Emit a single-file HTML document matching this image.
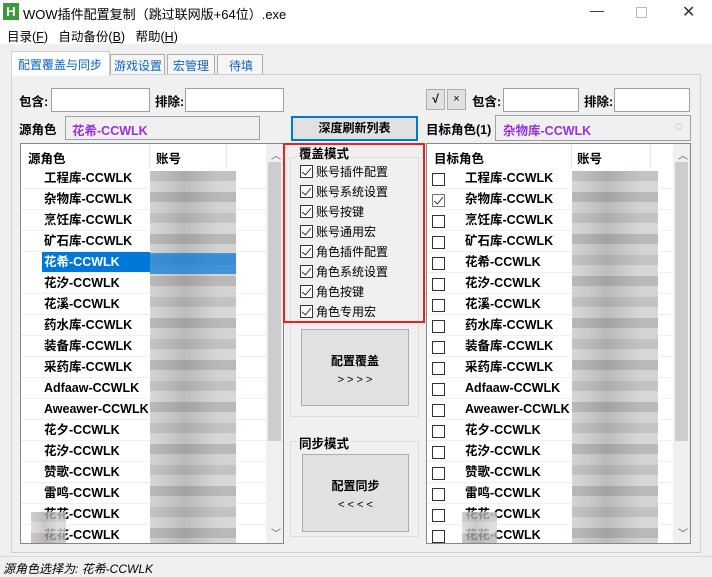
<!DOCTYPE html>
<html><head><meta charset="utf-8"><style>
*{box-sizing:border-box;margin:0;padding:0}
body{width:712px;height:576px;overflow:hidden;background:#f0f0f0;font-family:"Liberation Sans","Noto Sans CJK SC",sans-serif;font-size:12px;color:#000;position:relative}
.a{position:absolute}
.inp{position:absolute;background:#fff;border:1px solid #a0a0a0}
.b{font-weight:bold;font-size:12.5px}
.row{position:absolute;height:21px;border-bottom:1px solid #f0f0f0;line-height:21px;font-weight:bold;font-size:12.5px}
.cb{position:absolute;width:13px;height:13px;border:1px solid #333;background:#fff}
.ck{position:absolute;width:13px;height:13px;border:1px solid #333;background:#fff}
.ck:after{content:"";position:absolute;left:3px;top:0px;width:4px;height:8px;border:solid #333;border-width:0 1.5px 1.5px 0;transform:rotate(40deg)}
.blur{position:absolute;background:
linear-gradient(90deg,rgba(0,0,0,0) 0,rgba(0,0,0,.05) 20%,rgba(0,0,0,.12) 40%,rgba(0,0,0,.06) 60%,rgba(0,0,0,0) 80%),
repeating-linear-gradient(180deg,#c4c2c2 0,#c4c2c2 10px,#d8d7d7 10px,#d8d7d7 21px,#bab8b8 21px,#bab8b8 31px,#d3d3d3 31px,#d3d3d3 42px)}
.sb{position:absolute;background:#f0f0f0}
</style></head><body>
<div class="a" style="left:0;top:0;width:712px;height:25px;background:#fff"></div>
<div class="a" style="left:3px;top:3px;width:16px;height:17px;background:#3c9a3c;color:#fff;font-weight:bold;font-size:13px;text-align:center;line-height:17px">H</div>
<div class="a" style="left:23px;top:4px;font-size:13px">WOW插件配置复制（跳过联网版+64位）.exe</div>
<div class="a" style="left:590px;top:2px;font-size:14px;color:#333">—</div>
<div class="a" style="left:636px;top:7px;width:11px;height:11px;border:1px solid #bbb"></div>
<div class="a" style="left:682px;top:2px;font-size:16px;color:#333">✕</div>
<div class="a" style="left:0;top:25px;width:712px;height:19px;background:#fff"></div>
<div class="a" style="left:7px;top:26px;font-size:12.5px">目录(<u>F</u>)&nbsp;&nbsp;&nbsp;自动备份(<u>B</u>)&nbsp;&nbsp;&nbsp;帮助(<u>H</u>)</div>
<div class="a" style="left:11px;top:51px;width:99px;height:25px;background:#fff;border:1px solid #d0d0d0;border-bottom:none;color:#0a64c8;padding:4px 0 0 6px">配置覆盖与同步</div>
<div class="a" style="left:110px;top:54px;width:55px;height:20px;border:1px solid #adadad;border-bottom:none;color:#0a64c8;padding:2px 0 0 3px;background:#f6f6f6">游戏设置</div>
<div class="a" style="left:167px;top:54px;width:48px;height:20px;border:1px solid #adadad;border-bottom:none;color:#0a64c8;padding:2px 0 0 5px;background:#f6f6f6">宏管理</div>
<div class="a" style="left:217px;top:54px;width:46px;height:20px;border:1px solid #adadad;border-bottom:none;color:#0a64c8;padding:2px 0 0 11px;background:#f6f6f6">待填</div>
<div class="a" style="left:11px;top:75px;width:690px;height:478px;border:1px solid #d0d0d0;border-top:none"></div>
<div class="a" style="left:110px;top:74px;width:591px;height:1px;background:#d0d0d0"></div>
<div class="a b" style="left:19px;top:91px">包含:</div>
<div class="inp" style="left:51px;top:88px;width:99px;height:24px"></div>
<div class="a b" style="left:155px;top:91px">排除:</div>
<div class="inp" style="left:185px;top:88px;width:99px;height:24px"></div>
<div class="a b" style="left:19px;top:119px">源角色</div>
<div class="a" style="left:65px;top:116px;width:195px;height:24px;border:1px solid #a0a0a0;background:#f0f0f0;color:#9a30e0;font-weight:bold;padding:3px 0 0 6px;font-size:12.5px">花希-CCWLK</div>
<div class="a" style="left:291px;top:116px;width:127px;height:25px;border:2px solid #0078d7;background:#e1e1e1;text-align:center;line-height:21px;font-weight:bold">深度刷新列表</div>
<div class="a" style="left:426px;top:89px;width:19px;height:21px;border:1px solid #adadad;background:#e1e1e1;text-align:center;line-height:19px;font-weight:bold">√</div>
<div class="a" style="left:447px;top:89px;width:19px;height:21px;border:1px solid #adadad;background:#e1e1e1;text-align:center;line-height:19px;font-size:11px">×</div>
<div class="a b" style="left:472px;top:91px">包含:</div>
<div class="inp" style="left:503px;top:88px;width:76px;height:24px"></div>
<div class="a b" style="left:584px;top:91px">排除:</div>
<div class="inp" style="left:614px;top:88px;width:76px;height:24px"></div>
<div class="a b" style="left:426px;top:119px">目标角色(1)</div>
<div class="a" style="left:495px;top:115px;width:196px;height:26px;border:1px solid #a0a0a0;background:#f0f0f0;color:#9a30e0;font-weight:bold;padding:4px 0 0 7px;font-size:12.5px">杂物库-CCWLK</div>
<div class="a" style="left:675px;top:118px;font-size:8px;color:#bbb;line-height:9px">︿<br>﹀</div>

<div class="a" style="left:20px;top:143px;width:264px;height:401px;background:#fff;border:1px solid #828790;overflow:hidden">
 <div class="a b" style="left:7px;top:4px">源角色</div>
 <div class="a" style="left:128px;top:0;width:1px;height:24px;background:#e5e5e5"></div>
 <div class="a" style="left:205px;top:0;width:1px;height:24px;background:#e5e5e5"></div>
 <div class="a b" style="left:135px;top:4px">账号</div>
 <div class="a" style="left:0;top:24px;width:245px">
  <div class="row" style="top:0;left:0;width:245px;padding-left:23px">工程库-CCWLK</div>
  <div class="row" style="top:21px;left:0;width:245px;padding-left:23px">杂物库-CCWLK</div>
  <div class="row" style="top:42px;left:0;width:245px;padding-left:23px">烹饪库-CCWLK</div>
  <div class="row" style="top:63px;left:0;width:245px;padding-left:23px">矿石库-CCWLK</div>
  <div class="row" style="top:84px;left:21px;width:192px;padding-left:2px;background:#0078d7;color:#fff">花希-CCWLK</div>
  <div class="row" style="top:105px;left:0;width:245px;padding-left:23px">花汐-CCWLK</div>
  <div class="row" style="top:126px;left:0;width:245px;padding-left:23px">花溪-CCWLK</div>
  <div class="row" style="top:147px;left:0;width:245px;padding-left:23px">药水库-CCWLK</div>
  <div class="row" style="top:168px;left:0;width:245px;padding-left:23px">装备库-CCWLK</div>
  <div class="row" style="top:189px;left:0;width:245px;padding-left:23px">采药库-CCWLK</div>
  <div class="row" style="top:210px;left:0;width:245px;padding-left:23px">Adfaaw-CCWLK</div>
  <div class="row" style="top:231px;left:0;width:245px;padding-left:23px">Aweawer-CCWLK</div>
  <div class="row" style="top:252px;left:0;width:245px;padding-left:23px">花夕-CCWLK</div>
  <div class="row" style="top:273px;left:0;width:245px;padding-left:23px">花汐-CCWLK</div>
  <div class="row" style="top:294px;left:0;width:245px;padding-left:23px">赞歌-CCWLK</div>
  <div class="row" style="top:315px;left:0;width:245px;padding-left:23px">雷鸣-CCWLK</div>
  <div class="row" style="top:336px;left:0;width:245px;padding-left:23px">花花-CCWLK</div>
  <div class="row" style="top:357px;left:0;width:245px;padding-left:23px">花花-CCWLK</div>
 </div>
 <div class="blur" style="left:129px;top:27px;width:86px;height:374px"></div>
 <div class="a" style="left:129px;top:109px;width:86px;height:21px;background:rgba(0,120,215,.7)"></div>
 <div class="blur" style="left:10px;top:368px;width:35px;height:35px;opacity:.8"></div>
 <div class="sb" style="left:245px;top:0;width:17px;height:399px"></div>
 <div class="a" style="left:250px;top:3px;font-size:10px;color:#555">︿</div>
 <div class="a" style="left:247px;top:18px;width:13px;height:279px;background:#cdcdcd"></div>
 <div class="a" style="left:250px;top:381px;font-size:10px;color:#555">﹀</div>
</div>

<div class="a" style="left:290px;top:157px;width:129px;height:260px;border:1px solid #dcdcdc"></div>
<div class="a b" style="left:297px;top:143px;background:#f0f0f0;padding:0 2px">覆盖模式</div>
<div class="a" style="left:298px;top:163px">
 <div class="ck" style="left:2px;top:2px"></div><div class="a" style="left:18px;top:0;white-space:nowrap">账号插件配置</div>
 <div class="ck" style="left:2px;top:22px"></div><div class="a" style="left:18px;top:20px;white-space:nowrap">账号系统设置</div>
 <div class="ck" style="left:2px;top:42px"></div><div class="a" style="left:18px;top:40px;white-space:nowrap">账号按键</div>
 <div class="ck" style="left:2px;top:62px"></div><div class="a" style="left:18px;top:60px;white-space:nowrap">账号通用宏</div>
 <div class="ck" style="left:2px;top:82px"></div><div class="a" style="left:18px;top:80px;white-space:nowrap">角色插件配置</div>
 <div class="ck" style="left:2px;top:102px"></div><div class="a" style="left:18px;top:100px;white-space:nowrap">角色系统设置</div>
 <div class="ck" style="left:2px;top:122px"></div><div class="a" style="left:18px;top:120px;white-space:nowrap">角色按键</div>
 <div class="ck" style="left:2px;top:142px"></div><div class="a" style="left:18px;top:140px;white-space:nowrap">角色专用宏</div>
</div>
<div class="a" style="left:283px;top:143px;width:142px;height:180px;border:2px solid #e8221c"></div>
<div class="a" style="left:301px;top:329px;width:108px;height:77px;border:1px solid #adadad;background:#e1e1e1;text-align:center;padding-top:22px;font-weight:bold;line-height:18px">配置覆盖<br><span style="font-weight:normal;font-size:11px">&gt; &gt; &gt; &gt;</span></div>
<div class="a" style="left:290px;top:441px;width:129px;height:96px;border:1px solid #dcdcdc"></div>
<div class="a b" style="left:297px;top:433px;background:#f0f0f0;padding:0 2px">同步模式</div>
<div class="a" style="left:302px;top:454px;width:107px;height:78px;border:1px solid #adadad;background:#e1e1e1;text-align:center;padding-top:22px;font-weight:bold;line-height:18px">配置同步<br><span style="font-weight:normal;font-size:11px">&lt; &lt; &lt; &lt;</span></div>

<div class="a" style="left:426px;top:143px;width:265px;height:401px;background:#fff;border:1px solid #828790;overflow:hidden">
 <div class="a b" style="left:7px;top:4px">目标角色</div>
 <div class="a" style="left:144px;top:0;width:1px;height:24px;background:#e5e5e5"></div>
 <div class="a" style="left:223px;top:0;width:1px;height:24px;background:#e5e5e5"></div>
 <div class="a b" style="left:150px;top:4px">账号</div>
 <div class="a" style="left:0;top:24px;width:245px">
  <div class="row" style="top:0;width:245px;padding-left:38px">工程库-CCWLK</div>
  <div class="row" style="top:21px;width:245px;padding-left:38px">杂物库-CCWLK</div>
  <div class="row" style="top:42px;width:245px;padding-left:38px">烹饪库-CCWLK</div>
  <div class="row" style="top:63px;width:245px;padding-left:38px">矿石库-CCWLK</div>
  <div class="row" style="top:84px;width:245px;padding-left:38px">花希-CCWLK</div>
  <div class="row" style="top:105px;width:245px;padding-left:38px">花汐-CCWLK</div>
  <div class="row" style="top:126px;width:245px;padding-left:38px">花溪-CCWLK</div>
  <div class="row" style="top:147px;width:245px;padding-left:38px">药水库-CCWLK</div>
  <div class="row" style="top:168px;width:245px;padding-left:38px">装备库-CCWLK</div>
  <div class="row" style="top:189px;width:245px;padding-left:38px">采药库-CCWLK</div>
  <div class="row" style="top:210px;width:245px;padding-left:38px">Adfaaw-CCWLK</div>
  <div class="row" style="top:231px;width:245px;padding-left:38px">Aweawer-CCWLK</div>
  <div class="row" style="top:252px;width:245px;padding-left:38px">花夕-CCWLK</div>
  <div class="row" style="top:273px;width:245px;padding-left:38px">花汐-CCWLK</div>
  <div class="row" style="top:294px;width:245px;padding-left:38px">赞歌-CCWLK</div>
  <div class="row" style="top:315px;width:245px;padding-left:38px">雷鸣-CCWLK</div>
  <div class="row" style="top:336px;width:245px;padding-left:38px">花花-CCWLK</div>
  <div class="row" style="top:357px;width:245px;padding-left:38px">花花-CCWLK</div>
 </div>
 <div class="cb" style="left:5px;top:29px"></div>
 <div class="ck" style="left:5px;top:50px;border-color:#777"></div>
 <div class="cb" style="left:5px;top:71px"></div><div class="cb" style="left:5px;top:92px"></div>
 <div class="cb" style="left:5px;top:113px"></div><div class="cb" style="left:5px;top:134px"></div>
 <div class="cb" style="left:5px;top:155px"></div><div class="cb" style="left:5px;top:176px"></div>
 <div class="cb" style="left:5px;top:197px"></div><div class="cb" style="left:5px;top:218px"></div>
 <div class="cb" style="left:5px;top:239px"></div><div class="cb" style="left:5px;top:260px"></div>
 <div class="cb" style="left:5px;top:281px"></div><div class="cb" style="left:5px;top:302px"></div>
 <div class="cb" style="left:5px;top:323px"></div><div class="cb" style="left:5px;top:344px"></div>
 <div class="cb" style="left:5px;top:365px"></div><div class="cb" style="left:5px;top:386px"></div>
 <div class="blur" style="left:145px;top:27px;width:86px;height:374px"></div>
 <div class="blur" style="left:35px;top:368px;width:35px;height:35px;opacity:.8"></div>
 <div class="sb" style="left:246px;top:0;width:17px;height:399px"></div>
 <div class="a" style="left:251px;top:3px;font-size:10px;color:#555">︿</div>
 <div class="a" style="left:248px;top:18px;width:13px;height:279px;background:#cdcdcd"></div>
 <div class="a" style="left:251px;top:381px;font-size:10px;color:#555">﹀</div>
</div>

<div class="a" style="left:0;top:556px;width:712px;height:1px;background:#d8d8d8"></div>
<div class="a" style="left:3px;top:560px;font-style:italic;font-size:12px">源角色选择为: 花希-CCWLK</div>
</body></html>
